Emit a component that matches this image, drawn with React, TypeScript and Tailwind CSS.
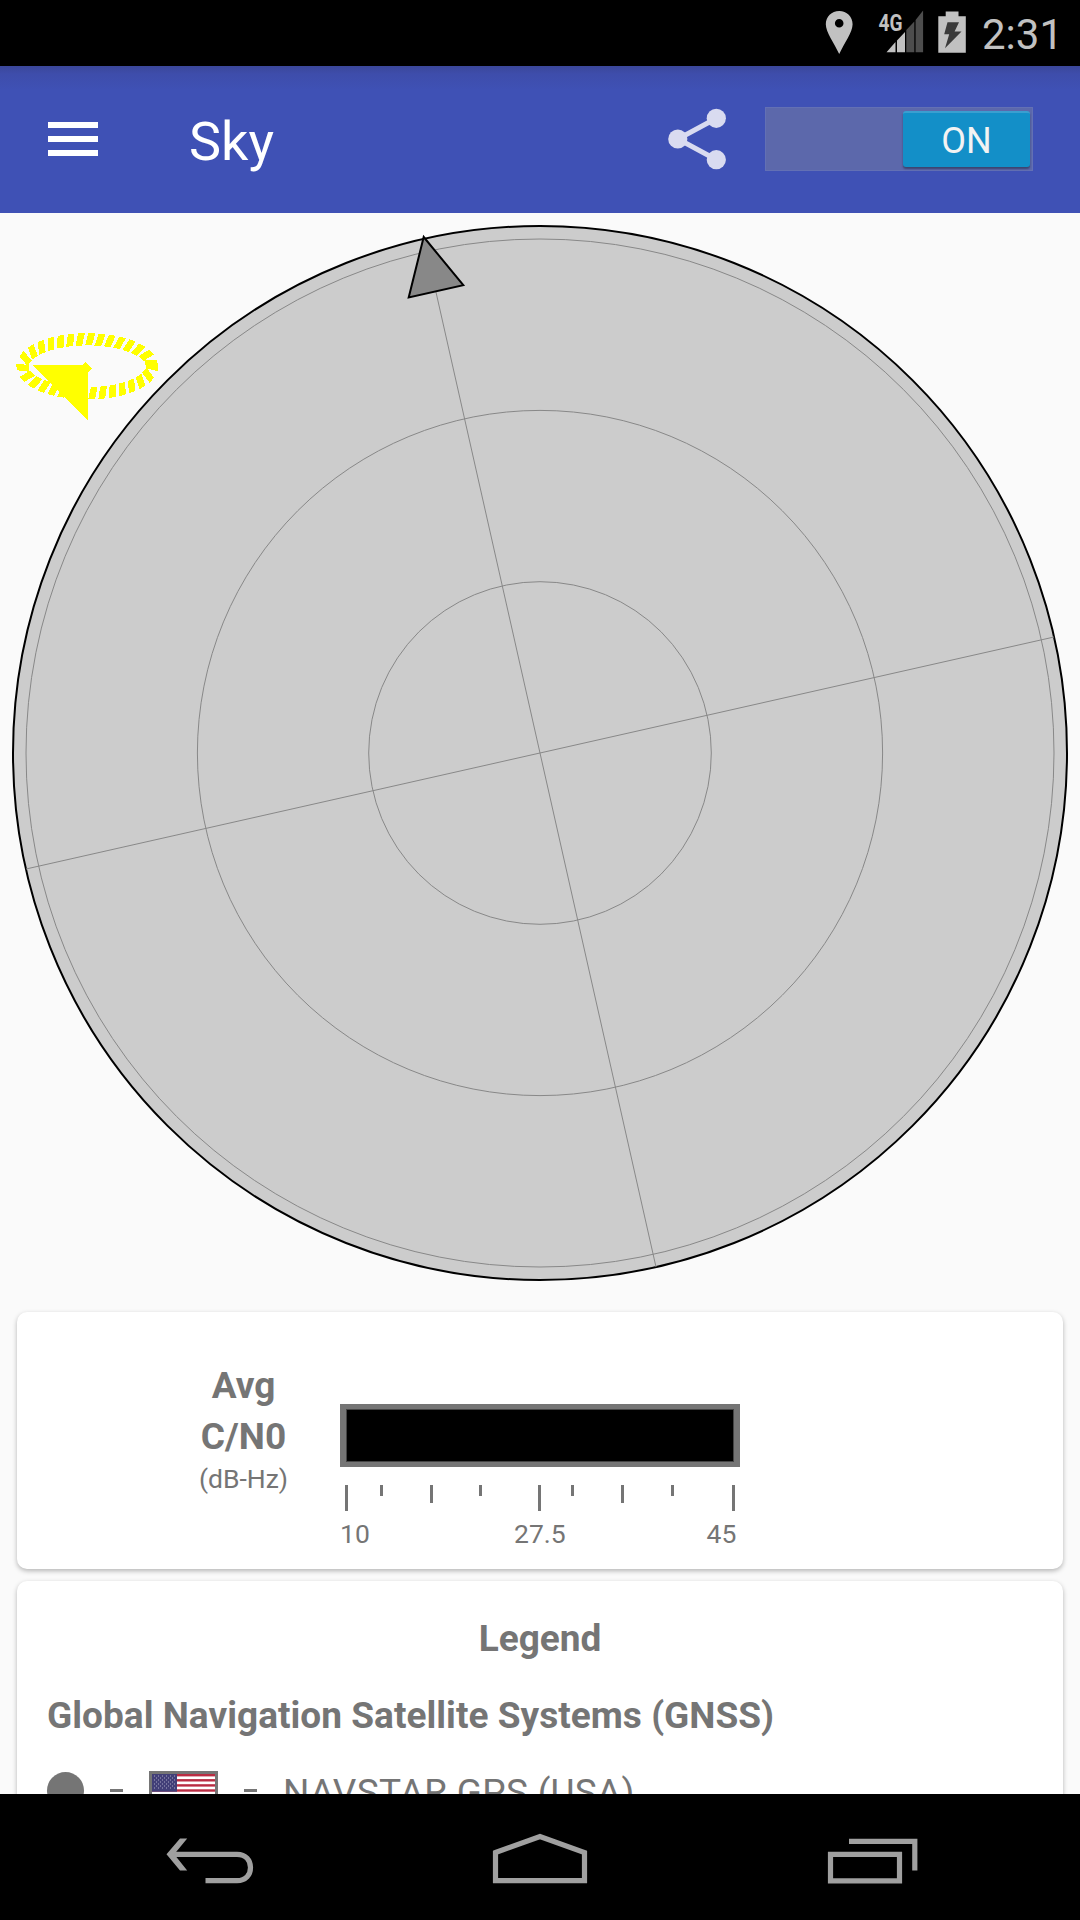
import React from "react";

const TICKS: [number, number][] = [
  [345, 26], [380, 11], [430, 18], [479, 11], [538, 26], [571, 11], [621, 18], [671, 11], [732, 26],
];

/* Tilted blocks spaced evenly along an ellipse, forming the rotation ring. */
function ringPath() {
  const cx = 87.2, cy = 366.3, rx = 64.5, ry = 27, step = 9.9;
  const tilt = (14 * Math.PI) / 180;
  let d = "";
  let travelled = step;
  const n = 3000;
  for (let i = 0; i < n; i++) {
    const t = (i / n) * 2 * Math.PI;
    const dx = -rx * Math.sin(t);
    const dy = ry * Math.cos(t);
    const speed = Math.hypot(dx, dy);
    travelled += (speed * 2 * Math.PI) / n;
    if (travelled < step) continue;
    travelled -= step;
    const x = cx + rx * Math.cos(t);
    const y = cy + ry * Math.sin(t);
    const tx = (dx / speed) * 3.4;
    const ty = (dy / speed) * 3.4;
    const nx = dy / speed;
    const ny = -dx / speed;
    const vx = 6.3 * (nx * Math.cos(tilt) - ny * Math.sin(tilt));
    const vy = 6.3 * (nx * Math.sin(tilt) + ny * Math.cos(tilt));
    const p = (a: number, b: number) =>
      `${(x + a * tx + b * vx).toFixed(1)} ${(y + a * ty + b * vy).toFixed(1)}`;
    d += `M${p(-1, -1)}L${p(1, -1)}L${p(1, 1)}L${p(-1, 1)}z`;
  }
  return d;
}

const RING = ringPath();

function StatusBar() {
  return (
    <div className="flex h-[66px] shrink-0 justify-end bg-black pr-[21px] text-[#c1c1c1]">
      <svg width="150" height="66" viewBox="820 0 150 66" className="mr-[12px]">
        <path fillRule="evenodd" fill="#c1c1c1" d="M839.2 11c-7.600 0-13.400 5.800-13.400 13.200C825.800 32 834 43 839.200 54c5.200-11 13.400-22 13.400-29.800C852.600 16.800 846.800 11 839.200 11zm0 7.900a4.300 4.300 0 1 1 0 8.600 4.300 4.300 0 0 1 0-8.600z" />
        <path fill="#c1c1c1" d="M886.500 52.300L895.500 42v10.300zM897 40.500l8-8.500v20.300h-8z" />
        <path fill="#4d4d4d" d="M906.300 30l8-8.500v30.800h-8zM915.600 20l7.500-9.500v41.800h-7.500z" />
        <text x="878.500" y="30.500" fontFamily="Roboto" fontWeight="700" fontSize="23" textLength="24" lengthAdjust="spacingAndGlyphs" fill="#c1c1c1">4G</text>
        <path fill="#c1c1c1" d="M938.300 16.300h7.400v-4.800h12.800v4.800h7.300v36.500h-27.500z" />
        <path fill="#3a3a3a" d="M947.500 22.300h11.500l-4.400 9.200h6.900L945 48.300l4.200-14h-5z" />
      </svg>
      <div className="w-[77px] whitespace-nowrap text-[42px] font-normal leading-[69px]">2:31</div>
    </div>
  );
}

function AppBar() {
  return (
    <header className="flex h-[147px] shrink-0 items-center bg-[#3f51b5] bg-[linear-gradient(to_bottom,#3a479a_0px,#3e4dab_8px,#3f51b5_24px)] text-white">
      <div className="mb-px ml-12 flex w-[50px] flex-col gap-[8.500px]">
        <div className="h-[5.800px] bg-white" />
        <div className="h-[5.800px] bg-white" />
        <div className="h-[5.800px] bg-white" />
      </div>
      <h1 className="ml-[91px] w-[479px] pt-[4px] text-[54px] leading-[60px]">Sky</h1>
      <svg width="60" height="64" viewBox="668 107 60 64" className="mb-[2px]">
        <path d="M716 118.500L678 139l38 20.500" fill="none" stroke="#d9dbf0" strokeWidth="5" />
        <circle cx="677.800" cy="139" r="9.600" fill="#d9dbf0" />
        <circle cx="716.300" cy="118.300" r="9.600" fill="#d9dbf0" />
        <circle cx="716.300" cy="159.700" r="9.600" fill="#d9dbf0" />
      </svg>
      <div className="mb-[2px] ml-[37px] flex h-[64px] w-[268px] items-start justify-end border border-[#6370b4] bg-[#5c68ab] pr-[2px] pt-[3px]">
        <div className="h-[56px] w-[127px] rounded-[3px] border-t-2 border-[#3a9fd0] bg-[#138fc8] text-center text-[36px] font-normal leading-[56px] text-[#f3f3f3] shadow-[0_2px_2px_rgba(0,0,0,0.35)]">ON</div>
      </div>
    </header>
  );
}

function SkyPlot() {
  return (
    <svg width="1080" height="1099" viewBox="0 213 1080 1099" className="block shrink-0">
      <circle cx="540" cy="753" r="527" fill="#ccc" stroke="#000" strokeWidth="2" />
      <g fill="none" stroke="#888" strokeWidth="1">
        <circle cx="540" cy="753" r="514" />
        <circle cx="540" cy="753" r="342.600" />
        <circle cx="540" cy="753" r="171.300" />
        <path d="M424 239L656 1267M26 869L1054 637" />
      </g>
      <path d="M423.700 237l39.600 48.200-54.600 12.300z" fill="#888" stroke="#000" strokeWidth="2" />
      <g shapeRendering="crispEdges" fill="#ff0">
        <path d={RING} />
        <path d="M32 365h50l3-3 7 6-4 4v49z" />
      </g>
    </svg>
  );
}

function SignalCard() {
  return (
    <section className="flex h-[257px] shrink-0 rounded-[10px] bg-white pl-[170px] shadow-[0_2px_5px_rgba(0,0,0,0.28)]">
      <div className="w-[113px] pt-[48px] text-center">
        <div className="text-[37px] font-bold leading-[51px]">Avg</div>
        <div className="text-[37px] font-bold leading-[51px]">C/N0</div>
        <div className="text-[26.500px] leading-[34px]">(dB-Hz)</div>
      </div>
      <div className="ml-[40px] w-[400px] pt-[92px]">
        <div className="h-[63px] border-x-[6px] border-y-[5px] border-[#757575] bg-black">
          <div className="h-full border border-[#444]" />
        </div>
        <svg width="400" height="26" viewBox="340 0 400 26" className="mt-[18px] block">
          {TICKS.map(([x, h]) => (
            <rect key={x} x={x} y="0" width="3" height={h} fill="#757575" />
          ))}
        </svg>
        <div className="mt-[5px] flex text-[26.500px] leading-[36px]">
          <span className="w-[174px]">10</span>
          <span className="w-[192.500px]">27.5</span>
          <span>45</span>
        </div>
      </div>
    </section>
  );
}

function UsFlag() {
  return (
    <svg width="69" height="40" viewBox="0 0 69 40" className="block shrink-0">
      <rect width="69" height="40" fill="#757575" />
      <rect x="3" y="3" width="63" height="34" fill="#fff" />
      {[0, 1, 2, 3, 4, 5, 6].map((i) => (
        <rect key={i} x="3" y={3 + i * 5.1} width="63" height="2.400" fill="#b92c42" />
      ))}
      <rect x="3" y="3" width="25" height="17.700" fill="#423f78" />
      <g stroke="#aaa9c4" strokeWidth="1" strokeDasharray="1 3">
        <path d="M5 5h22M5 9h22M5 13h22M5 17h22" />
        <path d="M7 7h20M7 11h20M7 15h20" />
      </g>
    </svg>
  );
}

function LegendCard() {
  return (
    <section className="mt-[12px] h-[340px] shrink-0 rounded-[10px] bg-white px-[30px] pt-[31px] shadow-[0_2px_5px_rgba(0,0,0,0.28)]">
      <h2 className="text-center text-[37px] font-bold leading-[54px]">Legend</h2>
      <h3 className="mt-[23px] whitespace-nowrap text-[37px] font-bold leading-[54px] tracking-[0.03px]">Global Navigation Satellite Systems (GNSS)</h3>
      <div className="mt-[28px] flex items-start">
        <div className="mt-px size-[37px] rounded-full bg-[#757575]" />
        <div className="ml-[26px] mt-[18px] h-[3px] w-[13px] bg-[#757575]" />
        <div className="ml-[26px]"><UsFlag /></div>
        <div className="ml-[26px] mt-[18px] h-[3px] w-[13px] bg-[#757575]" />
        <div className="ml-[26px] whitespace-nowrap text-[37px] font-normal leading-[43px] tracking-[0.28px]">NAVSTAR GPS (USA)</div>
      </div>
    </section>
  );
}

function NavBar() {
  return (
    <nav className="h-[126px] shrink-0 bg-black">
      <svg width="1080" height="126" viewBox="0 1794 1080 126" fill="none" stroke="#a0a0a0" strokeWidth="5.200">
        <path d="M173 1854.300h64c9 0 13.500 6 13.500 13.200s-4.500 13.200-13.500 13.200h-31.500" />
        <path fill="#a0a0a0" stroke="none" d="M166.500 1854.300L180 1838.500h7.200l-13 15.800 13 16.200H180z" />
        <path d="M495.500 1852.500L540 1836.500l44.500 16v28.200h-89z" />
        <path d="M830.500 1854.300h69v26.500h-69zM849 1841.300h65.800v29.200" />
      </svg>
    </nav>
  );
}

export default function App() {
  return (
    <div className="flex h-[1920px] w-[1080px] flex-col overflow-hidden bg-[#fafafa] font-[Roboto,sans-serif] text-[#757575]">
      <StatusBar />
      <AppBar />
      <main className="flex h-[1581px] shrink-0 flex-col overflow-hidden">
        <SkyPlot />
        <div className="flex flex-col px-[17px]">
          <SignalCard />
          <LegendCard />
        </div>
      </main>
      <NavBar />
    </div>
  );
}
